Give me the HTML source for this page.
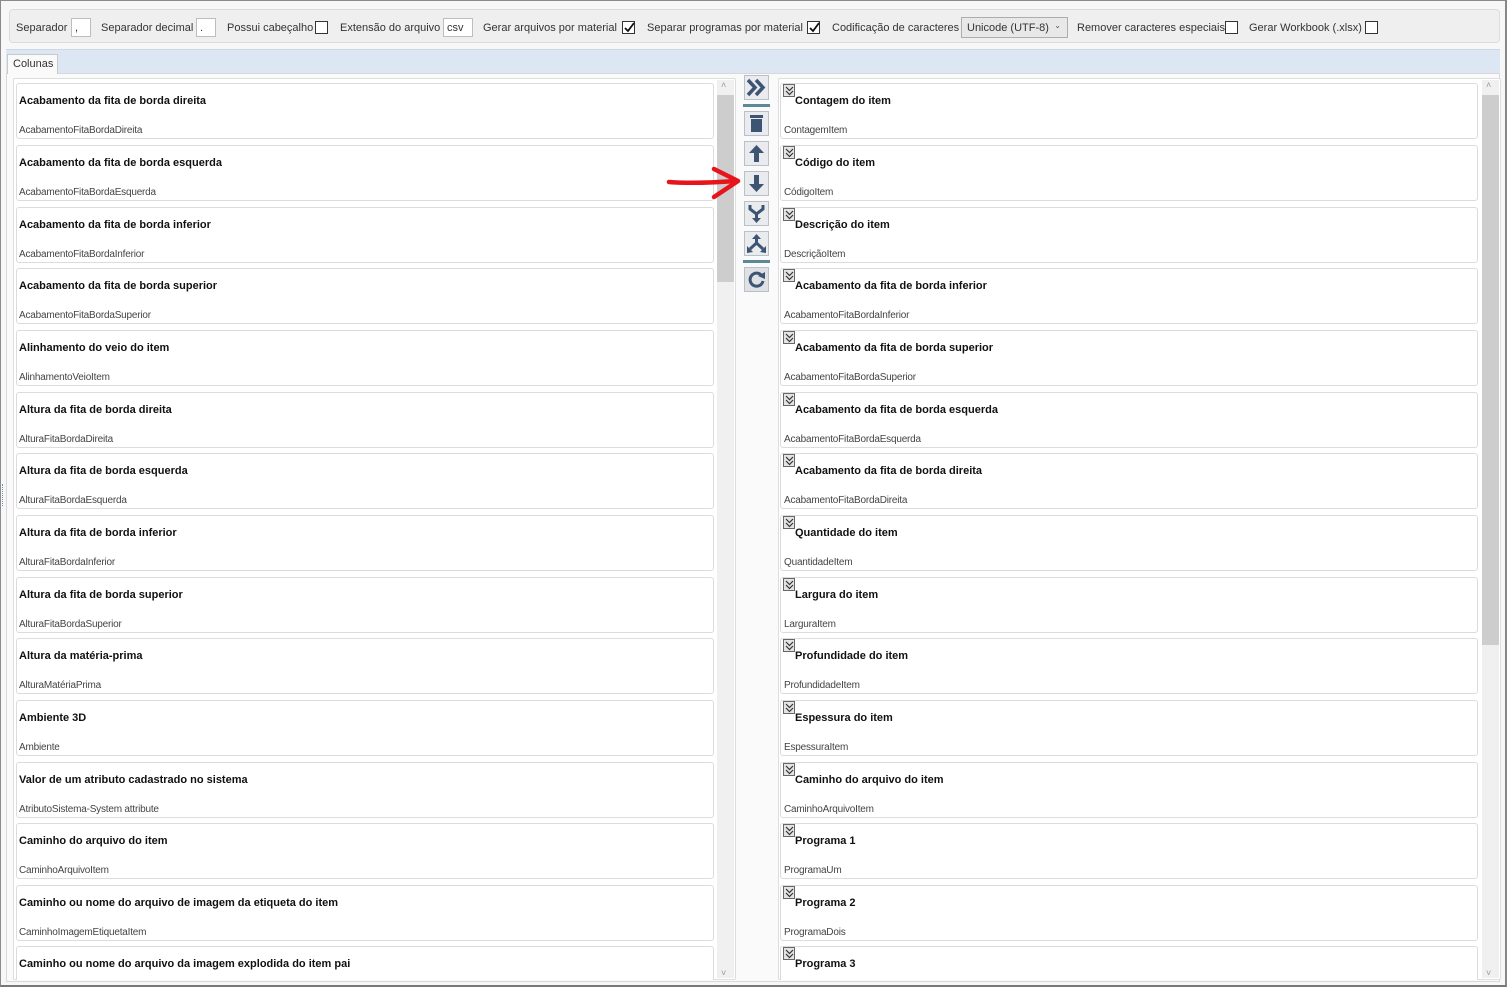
<!DOCTYPE html>
<html><head><meta charset="utf-8">
<style>
*{margin:0;padding:0;box-sizing:border-box}
body{width:1507px;height:987px;background:#fff;font-family:"Liberation Sans",sans-serif;font-size:11px;color:#222;position:relative;overflow:hidden}
.abs{position:absolute}
.outer{left:0;top:0;width:1507px;height:987px;border:1px solid #8a8a8a;border-bottom:2px solid #777;border-right:2px solid #888;background:#f7f7f7}
.tb{left:9px;top:9px;width:1491px;height:34px;background:#efefef;border:1px solid #dcdcdc;border-radius:4px}
.lbl{position:absolute;top:22px;font-size:11px;color:#333;white-space:nowrap}
.tx{position:absolute;top:18px;height:19px;border:1px solid #bdbdbd;background:#fff;font-size:11px;padding:3px 3px;color:#333}
.cb{position:absolute;top:21px;width:13px;height:13px;border:1px solid #333;background:#fff}
.cb svg{position:absolute;left:1px;top:0}
.strip{left:6px;top:49px;width:1494px;height:24px;background:#dde6f3;border-top:1px solid #cfd8e6}
.tab{left:7px;top:54px;width:51px;height:20px;background:#fafafa;border:1px solid #c9c9c9;border-bottom:none;font-size:11px;padding:3px 0 0 5px;color:#333}
.panel{left:6px;top:73px;width:1494px;height:909px;background:#fafafa;border:1px solid #d8d8d8}
.list{background:#fff;border:1px solid #dedede;border-radius:2px}
.it{position:absolute;height:56px;background:#fff;border:1px solid #dcdcdc;border-radius:3px}
.it b{position:absolute;left:2px;top:11px;font-size:11px;font-weight:bold;color:#111;white-space:nowrap}
.it i{position:absolute;left:2px;top:41px;font-size:10px;font-style:normal;color:#444;white-space:nowrap;letter-spacing:-0.2px}
.r b{left:14px;top:11px}
.r i{left:3px}
.ck{position:absolute;left:2px;top:0px;width:12px;height:13px;background:#e4e4e4;border:1px solid #666}
.ck svg{position:absolute;left:1px;top:1px}
.sb{position:absolute;width:17px;background:#f0f0f0}
.th{position:absolute;left:0;width:17px;background:#cdcdcd}
.btn{position:absolute;left:744px;width:25px;height:25px;background:#e9ebee;border:1px solid #b9c0c8}
.sep{position:absolute;left:743px;width:27px;height:3px;background:#5b8a96}
</style></head><body>
<div class="abs outer"></div>
<div class="abs tb"></div>
<span class="lbl" style="left:16px">Separador</span>
<div class="tx" style="left:71px;width:20px">,</div>
<span class="lbl" style="left:101px">Separador decimal</span>
<div class="tx" style="left:196px;width:20px">.</div>
<span class="lbl" style="left:227px">Possui cabeçalho</span>
<div class="cb" style="left:315px"></div>
<span class="lbl" style="left:340px">Extensão do arquivo</span>
<div class="tx" style="left:443px;width:30px">csv</div>
<span class="lbl" style="left:483px">Gerar arquivos por material</span>
<div class="cb" style="left:622px"><svg width="11" height="11" viewBox="0 0 11 11"><path d="M1 6 L4 9 L10 1" stroke="#111" stroke-width="1.8" fill="none"/></svg></div>
<span class="lbl" style="left:647px">Separar programas por material</span>
<div class="cb" style="left:807px"><svg width="11" height="11" viewBox="0 0 11 11"><path d="M1 6 L4 9 L10 1" stroke="#111" stroke-width="1.8" fill="none"/></svg></div>
<span class="lbl" style="left:832px">Codificação de caracteres</span>
<div class="tx" style="left:961px;width:107px;height:21px;top:17px;background:#e8e8e8;border-color:#adadad;padding:4px 5px">Unicode (UTF-8)<span style="position:absolute;right:6px;top:3px;font-size:8px;color:#555">&#8964;</span></div>
<span class="lbl" style="left:1077px">Remover caracteres especiais</span>
<div class="cb" style="left:1225px"></div>
<span class="lbl" style="left:1249px">Gerar Workbook (.xlsx)</span>
<div class="cb" style="left:1365px"></div>

<div class="abs strip"></div>
<div class="abs panel"></div>
<div class="abs tab">Colunas</div>
<div class="abs" style="left:2px;top:484px;width:2px;height:22px;border-left:1px dotted #7890b0"></div>

<div class="abs list" style="left:13px;top:78px;width:723px;height:902px"></div>
<div class="abs list" style="left:778px;top:78px;width:723px;height:902px"></div>

<div class="sb" style="left:717px;top:80px;height:898px"><div class="th" style="top:15px;height:187px"></div><span style="position:absolute;left:4px;top:0;font-size:9px;color:#999">&#708;</span><span style="position:absolute;left:4px;bottom:0;font-size:9px;color:#999">&#709;</span></div>
<div class="sb" style="left:1482px;top:80px;height:898px"><div class="th" style="top:15px;height:550px"></div><span style="position:absolute;left:4px;top:0;font-size:9px;color:#999">&#708;</span><span style="position:absolute;left:4px;bottom:0;font-size:9px;color:#999">&#709;</span></div>

<div class="abs" style="left:16px;top:0;width:698px;height:980px;overflow:hidden">
<div class="it" style="left:0;top:83px;width:698px"><b>Acabamento da fita de borda direita</b><i>AcabamentoFitaBordaDireita</i></div>
<div class="it" style="left:0;top:145px;width:698px"><b>Acabamento da fita de borda esquerda</b><i>AcabamentoFitaBordaEsquerda</i></div>
<div class="it" style="left:0;top:207px;width:698px"><b>Acabamento da fita de borda inferior</b><i>AcabamentoFitaBordaInferior</i></div>
<div class="it" style="left:0;top:268px;width:698px"><b>Acabamento da fita de borda superior</b><i>AcabamentoFitaBordaSuperior</i></div>
<div class="it" style="left:0;top:330px;width:698px"><b>Alinhamento do veio do item</b><i>AlinhamentoVeioItem</i></div>
<div class="it" style="left:0;top:392px;width:698px"><b>Altura da fita de borda direita</b><i>AlturaFitaBordaDireita</i></div>
<div class="it" style="left:0;top:453px;width:698px"><b>Altura da fita de borda esquerda</b><i>AlturaFitaBordaEsquerda</i></div>
<div class="it" style="left:0;top:515px;width:698px"><b>Altura da fita de borda inferior</b><i>AlturaFitaBordaInferior</i></div>
<div class="it" style="left:0;top:577px;width:698px"><b>Altura da fita de borda superior</b><i>AlturaFitaBordaSuperior</i></div>
<div class="it" style="left:0;top:638px;width:698px"><b>Altura da matéria-prima</b><i>AlturaMatériaPrima</i></div>
<div class="it" style="left:0;top:700px;width:698px"><b>Ambiente 3D</b><i>Ambiente</i></div>
<div class="it" style="left:0;top:762px;width:698px"><b>Valor de um atributo cadastrado no sistema</b><i>AtributoSistema-System attribute</i></div>
<div class="it" style="left:0;top:823px;width:698px"><b>Caminho do arquivo do item</b><i>CaminhoArquivoItem</i></div>
<div class="it" style="left:0;top:885px;width:698px"><b>Caminho ou nome do arquivo de imagem da etiqueta do item</b><i>CaminhoImagemEtiquetaItem</i></div>
<div class="it" style="left:0;top:946px;width:698px"><b>Caminho ou nome do arquivo da imagem explodida do item pai</b><i></i></div>
</div>

<div class="abs" style="left:780px;top:0;width:698px;height:980px;overflow:hidden">
<div class="it r" style="left:0;top:83px;width:698px"><span class="ck"><svg width="9" height="10" viewBox="0 0 9 10"><path d="M1 1 L4.5 4.5 L8 1 M1 5 L4.5 8.5 L8 5" stroke="#333" stroke-width="1.2" fill="none"/></svg></span><b>Contagem do item</b><i>ContagemItem</i></div>
<div class="it r" style="left:0;top:145px;width:698px"><span class="ck"><svg width="9" height="10" viewBox="0 0 9 10"><path d="M1 1 L4.5 4.5 L8 1 M1 5 L4.5 8.5 L8 5" stroke="#333" stroke-width="1.2" fill="none"/></svg></span><b>Código do item</b><i>CódigoItem</i></div>
<div class="it r" style="left:0;top:207px;width:698px"><span class="ck"><svg width="9" height="10" viewBox="0 0 9 10"><path d="M1 1 L4.5 4.5 L8 1 M1 5 L4.5 8.5 L8 5" stroke="#333" stroke-width="1.2" fill="none"/></svg></span><b>Descrição do item</b><i>DescriçãoItem</i></div>
<div class="it r" style="left:0;top:268px;width:698px"><span class="ck"><svg width="9" height="10" viewBox="0 0 9 10"><path d="M1 1 L4.5 4.5 L8 1 M1 5 L4.5 8.5 L8 5" stroke="#333" stroke-width="1.2" fill="none"/></svg></span><b>Acabamento da fita de borda inferior</b><i>AcabamentoFitaBordaInferior</i></div>
<div class="it r" style="left:0;top:330px;width:698px"><span class="ck"><svg width="9" height="10" viewBox="0 0 9 10"><path d="M1 1 L4.5 4.5 L8 1 M1 5 L4.5 8.5 L8 5" stroke="#333" stroke-width="1.2" fill="none"/></svg></span><b>Acabamento da fita de borda superior</b><i>AcabamentoFitaBordaSuperior</i></div>
<div class="it r" style="left:0;top:392px;width:698px"><span class="ck"><svg width="9" height="10" viewBox="0 0 9 10"><path d="M1 1 L4.5 4.5 L8 1 M1 5 L4.5 8.5 L8 5" stroke="#333" stroke-width="1.2" fill="none"/></svg></span><b>Acabamento da fita de borda esquerda</b><i>AcabamentoFitaBordaEsquerda</i></div>
<div class="it r" style="left:0;top:453px;width:698px"><span class="ck"><svg width="9" height="10" viewBox="0 0 9 10"><path d="M1 1 L4.5 4.5 L8 1 M1 5 L4.5 8.5 L8 5" stroke="#333" stroke-width="1.2" fill="none"/></svg></span><b>Acabamento da fita de borda direita</b><i>AcabamentoFitaBordaDireita</i></div>
<div class="it r" style="left:0;top:515px;width:698px"><span class="ck"><svg width="9" height="10" viewBox="0 0 9 10"><path d="M1 1 L4.5 4.5 L8 1 M1 5 L4.5 8.5 L8 5" stroke="#333" stroke-width="1.2" fill="none"/></svg></span><b>Quantidade do item</b><i>QuantidadeItem</i></div>
<div class="it r" style="left:0;top:577px;width:698px"><span class="ck"><svg width="9" height="10" viewBox="0 0 9 10"><path d="M1 1 L4.5 4.5 L8 1 M1 5 L4.5 8.5 L8 5" stroke="#333" stroke-width="1.2" fill="none"/></svg></span><b>Largura do item</b><i>LarguraItem</i></div>
<div class="it r" style="left:0;top:638px;width:698px"><span class="ck"><svg width="9" height="10" viewBox="0 0 9 10"><path d="M1 1 L4.5 4.5 L8 1 M1 5 L4.5 8.5 L8 5" stroke="#333" stroke-width="1.2" fill="none"/></svg></span><b>Profundidade do item</b><i>ProfundidadeItem</i></div>
<div class="it r" style="left:0;top:700px;width:698px"><span class="ck"><svg width="9" height="10" viewBox="0 0 9 10"><path d="M1 1 L4.5 4.5 L8 1 M1 5 L4.5 8.5 L8 5" stroke="#333" stroke-width="1.2" fill="none"/></svg></span><b>Espessura do item</b><i>EspessuraItem</i></div>
<div class="it r" style="left:0;top:762px;width:698px"><span class="ck"><svg width="9" height="10" viewBox="0 0 9 10"><path d="M1 1 L4.5 4.5 L8 1 M1 5 L4.5 8.5 L8 5" stroke="#333" stroke-width="1.2" fill="none"/></svg></span><b>Caminho do arquivo do item</b><i>CaminhoArquivoItem</i></div>
<div class="it r" style="left:0;top:823px;width:698px"><span class="ck"><svg width="9" height="10" viewBox="0 0 9 10"><path d="M1 1 L4.5 4.5 L8 1 M1 5 L4.5 8.5 L8 5" stroke="#333" stroke-width="1.2" fill="none"/></svg></span><b>Programa 1</b><i>ProgramaUm</i></div>
<div class="it r" style="left:0;top:885px;width:698px"><span class="ck"><svg width="9" height="10" viewBox="0 0 9 10"><path d="M1 1 L4.5 4.5 L8 1 M1 5 L4.5 8.5 L8 5" stroke="#333" stroke-width="1.2" fill="none"/></svg></span><b>Programa 2</b><i>ProgramaDois</i></div>
<div class="it r" style="left:0;top:946px;width:698px"><span class="ck"><svg width="9" height="10" viewBox="0 0 9 10"><path d="M1 1 L4.5 4.5 L8 1 M1 5 L4.5 8.5 L8 5" stroke="#333" stroke-width="1.2" fill="none"/></svg></span><b>Programa 3</b><i></i></div>
</div>

<div class="btn" style="top:75px"><svg width="23" height="23" viewBox="0 0 23 23"><path d="M3 4 L10 11.5 L3 19 M11 4 L18 11.5 L11 19" stroke="#3d5572" stroke-width="3.5" fill="none"/></svg></div>
<div class="sep" style="top:104px"></div>
<div class="btn" style="top:111px"><svg width="23" height="23" viewBox="0 0 23 23"><rect x="5" y="3" width="13" height="3" fill="#3d5572"/><rect x="6" y="7" width="11" height="13" fill="#3d5572"/></svg></div>
<div class="btn" style="top:141px"><svg width="23" height="23" viewBox="0 0 23 23"><path d="M11.5 3 L19 11 L14 11 L14 20 L9 20 L9 11 L4 11 Z" fill="#3d5572"/></svg></div>
<div class="btn" style="top:171px"><svg width="23" height="23" viewBox="0 0 23 23"><path d="M11.5 20 L19 12 L14 12 L14 3 L9 3 L9 12 L4 12 Z" fill="#3d5572"/></svg></div>
<div class="btn" style="top:201px"><svg width="23" height="23" viewBox="0 0 23 23"><path d="M5 3 L5 7 L11.5 12 L18 7 L18 3 M11.5 12 L11.5 17" stroke="#3d5572" stroke-width="3" fill="none"/><path d="M7 16 L16 16 L11.5 21 Z" fill="#3d5572"/></svg></div>
<div class="btn" style="top:231px"><svg width="23" height="23" viewBox="0 0 23 23"><path d="M11.5 5 L11.5 11 L5 17 M11.5 11 L18 17" stroke="#3d5572" stroke-width="3" fill="none"/><path d="M7 7 L16 7 L11.5 2 Z" fill="#3d5572"/><path d="M2 14 L2 21 L8 20 Z M21 14 L21 21 L15 20 Z" fill="#3d5572"/></svg></div>
<div class="sep" style="top:260px"></div>
<div class="btn" style="top:267px;background:#dfe1e4"><svg width="23" height="23" viewBox="0 0 23 23"><path d="M17 8 A6.5 6.5 0 1 0 18 13" stroke="#3d5572" stroke-width="3" fill="none"/><path d="M13 8 L20 4 L20 11 Z" fill="#3d5572"/></svg></div>

<svg class="abs" style="left:664px;top:164px" width="80" height="40" viewBox="0 0 80 40"><path d="M5 18 Q30 20 72 17" stroke="#e8141b" stroke-width="4.5" fill="none" stroke-linecap="round"/><path d="M50 5 L74 17 L50 33" stroke="#e8141b" stroke-width="4.5" fill="none" stroke-linecap="round" stroke-linejoin="round"/></svg>
</body></html>
